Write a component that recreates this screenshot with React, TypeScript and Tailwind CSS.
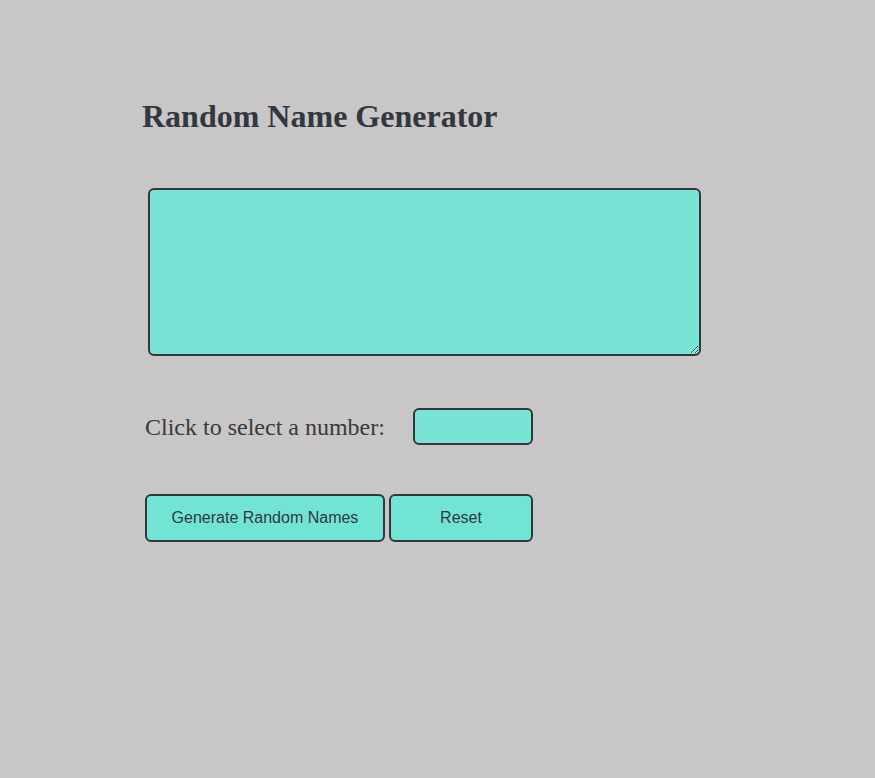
export default function App() {
  return (
    <div className="min-h-[778px] w-full bg-[#c8c6c7] text-[#333840]" style={{ fontFamily: '"Liberation Serif", "Times New Roman", serif' }}>
      <div className="pl-[142px] pt-[96px]">
        <h1 className="text-[32px] font-bold leading-[40px] m-0">Random Name Generator</h1>
        <div className="mt-[52px] pl-[6px]">
          <textarea className="block w-[553px] h-[168px] bg-[#77e4d5] border-2 border-[#33363d] rounded-[6px] outline-none" />
        </div>
        <div className="mt-[52px] flex items-center pl-[3px]">
          <span className="text-[24px] leading-[30px] text-[#3a3a3a]">Click to select a number:</span>
          <input className="ml-[28px] w-[120px] h-[37px] bg-[#77e4d5] border-2 border-[#33363d] rounded-[6px] outline-none" />
        </div>
        <div className="mt-[49px] flex gap-[4px] pl-[3px]" style={{ fontFamily: '"Liberation Sans", Arial, sans-serif' }}>
          <button className="w-[240px] h-[48px] bg-[#71e4d3] border-2 border-[#33363d] rounded-[6px] text-[16px] text-[#333840]">Generate Random Names</button>
          <button className="w-[144px] h-[48px] bg-[#71e4d3] border-2 border-[#33363d] rounded-[6px] text-[16px] text-[#333840]">Reset</button>
        </div>
      </div>
    </div>
  );
}
